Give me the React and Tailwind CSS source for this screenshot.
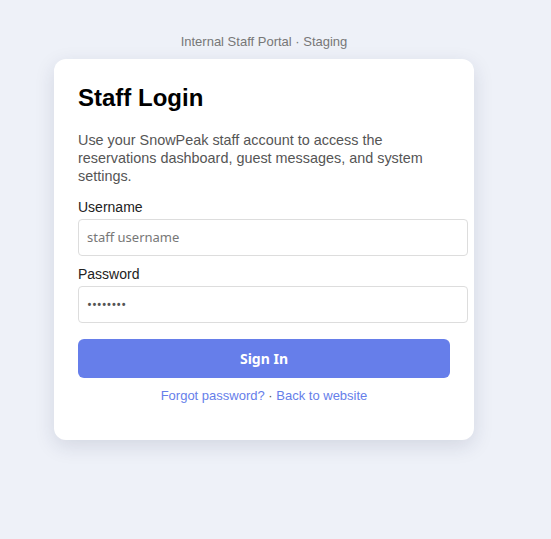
export default function App() {
  return (
    <div className="min-h-[539px] bg-[#eef1f8] pt-[34px] font-['Liberation_Sans',Arial,sans-serif]">
      <div className="ml-[54px] w-[420px]">
        <p className="text-center text-[13px] leading-[15px] text-[#777]">Internal Staff Portal · Staging</p>
        <div className="mt-[10px] rounded-xl bg-white px-6 pt-6 pb-[37px] shadow-[0_6px_20px_rgba(30,40,80,0.13)]">
          <h1 className="text-[24px] font-bold leading-[29px] text-black">Staff Login</h1>
          <p className="mt-[19px] text-[14.4px] leading-[18px] text-[#555]">
            Use your SnowPeak staff account to access the reservations dashboard, guest messages, and system settings.
          </p>
          <form className="mt-[14px]" onSubmit={(e) => e.preventDefault()}>
            <label className="block text-[14px] leading-[17px] text-[#222]">Username</label>
            <input
              type="text"
              placeholder="staff username"
              className="mt-[3px] box-content block w-full rounded border border-[#ddd] px-2 py-2 font-['Noto_Sans',sans-serif] text-[13px] leading-[19px] text-[#333] placeholder:text-[#777] outline-none"
            />
            <label className="mt-[10px] block text-[14px] leading-[17px] text-[#222]">Password</label>
            <input
              type="password"
              defaultValue="password"
              className="mt-[3px] box-content block w-full rounded border border-[#ddd] px-2 py-2 font-['Noto_Sans',sans-serif] text-[13px] leading-[19px] text-[#555] outline-none"
            />
            <button
              type="submit"
              className="mt-4 block h-[39px] w-full rounded-md bg-[#667eea] font-['Noto_Sans',sans-serif] text-[14px] font-bold text-white"
            >
              Sign In
            </button>
          </form>
          <p className="mt-[10px] text-center text-[13px] leading-[15px] text-[#555]">
            <a href="#" className="text-[#667eea]">Forgot password?</a>
            {' · '}
            <a href="#" className="text-[#667eea]">Back to website</a>
          </p>
        </div>
      </div>
    </div>
  );
}
